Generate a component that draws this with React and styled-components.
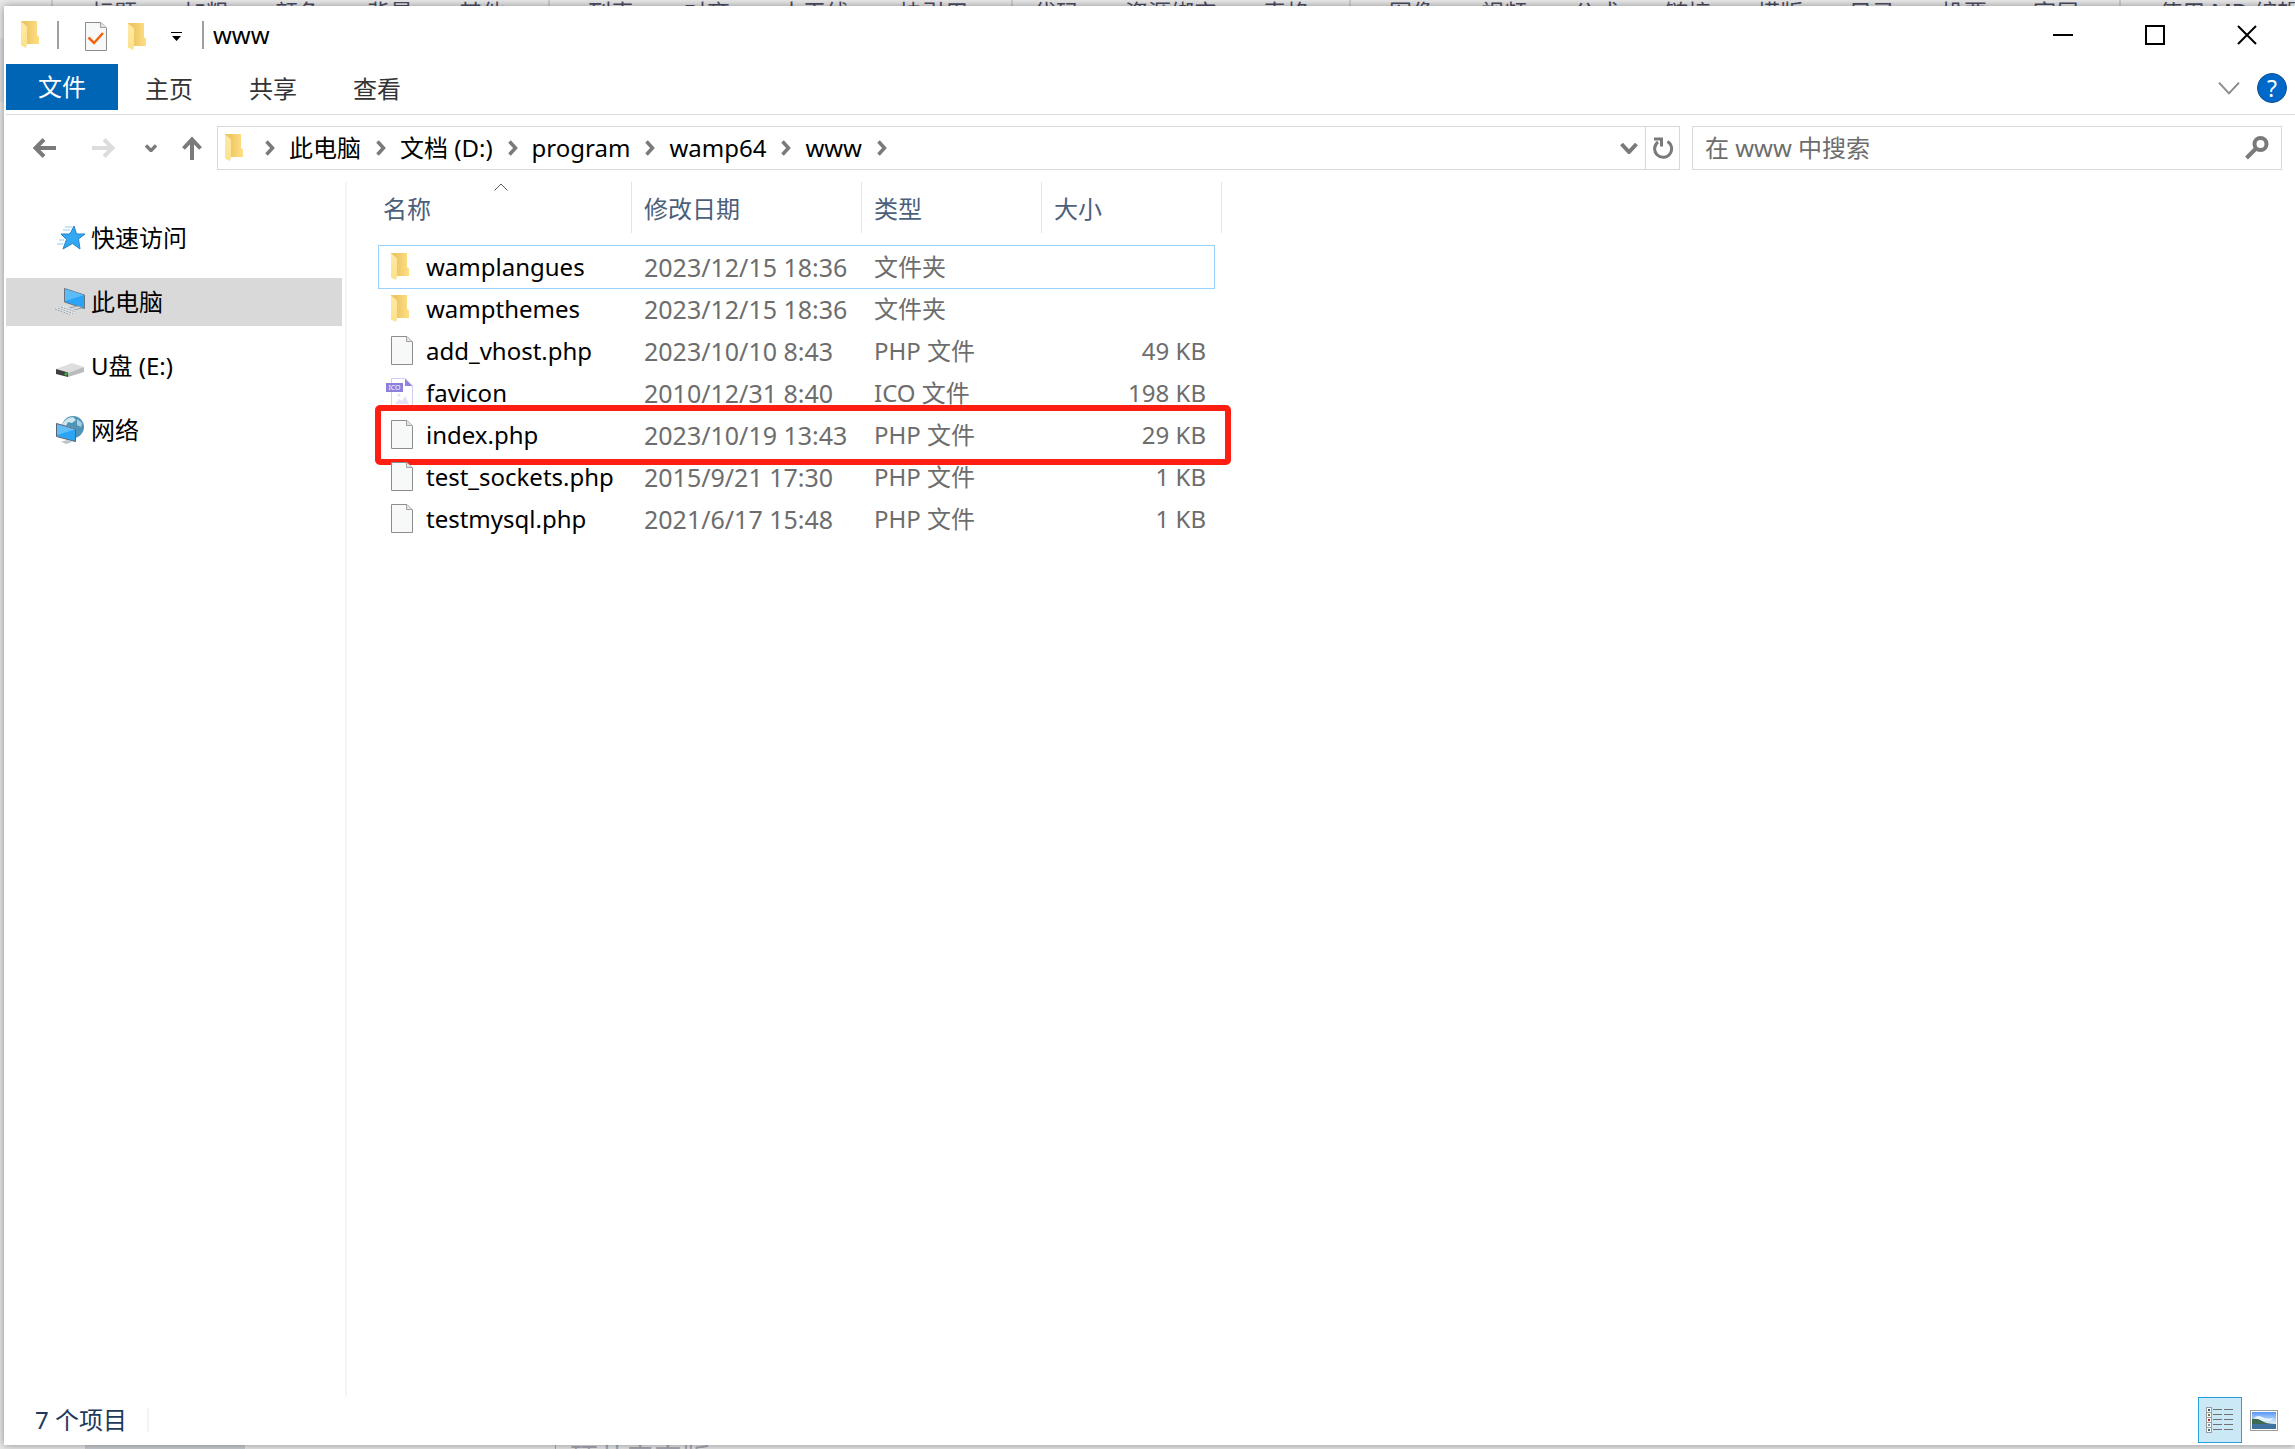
import React from "react";
import styled, { createGlobalStyle } from "styled-components";

const GlobalStyle = createGlobalStyle`
  * {
    box-sizing: border-box;
  }

  body {
    margin: 0;
    font-family: "Noto Sans", "Noto Sans CJK SC", sans-serif;
    font-size: 24px;
    line-height: 32px;
    color: #000;
  }

  button {
    margin: 0;
    padding: 0;
    border: none;
    background: none;
    font: inherit;
    color: inherit;
    cursor: pointer;
  }

  svg {
    display: block;
    flex: none;
  }
`;

const Desktop = styled.div`
  position: relative;
  display: flex;
  height: 100vh;
  padding: 6px 0 4px 4px;
  overflow: hidden;
  background: #e6e6e6;
`;

/* the editor page that sits behind the explorer window */
const Backdrop = styled.div`
  position: absolute;
  inset: 0;
  background: linear-gradient(#eaeaea 38px, #dcdfe2 38px, #dcdfe2 102px, #e8e8e8 102px);
  color: #4e4e66;
  font-size: 23px;
`;

const EditorBar = styled.div`
  display: grid;
  grid-template-columns: 51px 497px 463px 338px 770px 1fr;
  height: 38px;
  white-space: nowrap;
`;

const EditorGroup = styled.div`
  display: flex;
  gap: ${({ $gap }) => $gap || 46}px;
  padding-left: ${({ $pad }) => $pad || 38}px;
  border-left: 2px solid ${({ $plain }) => ($plain ? "transparent" : "#cfcfcf")};
  line-height: 24px;
`;

const EditorFooter = styled.div`
  position: absolute;
  left: 85px;
  bottom: 0;
  width: 160px;
  height: 4px;
  background: #c9cdd1;
`;

const EditorHint = styled.div`
  position: absolute;
  left: 555px;
  bottom: 0;
  height: 5px;
  padding-left: 14px;
  border-left: 1px solid #a8a8b4;
  overflow: hidden;
  color: #a8a8b4;
  font-size: 28px;
  line-height: 28px;
`;

const Window = styled.div`
  position: relative;
  display: flex;
  flex-direction: column;
  flex: 1;
  min-width: 0;
  padding-left: 2px;
  background: #fff;
  box-shadow: 0 0 8px rgba(0, 0, 0, 0.4);
`;

const TitleBar = styled.header`
  display: flex;
  align-items: center;
  height: 58px;
  padding: 0 2px 0 15px;
`;

const QuickTools = styled.div`
  display: flex;
  align-items: center;
  gap: 21px;
  padding: 4px 20px 0 26px;
  margin: 0 9px 0 14px;
  border-left: 2px solid #a0a0a0;
  border-right: 2px solid #a0a0a0;
  height: 28px;
`;

const WindowTitle = styled.h1`
  flex: 1;
  margin: 0;
  font-size: 24px;
  font-weight: 400;
`;

const CaptionButton = styled.button`
  display: flex;
  align-items: center;
  justify-content: center;
  width: 92px;
  height: 58px;
`;

const Ribbon = styled.nav`
  display: flex;
  height: 51px;
  border-bottom: 1px solid #dadbdc;
  padding-right: 8px;
`;

const RibbonTab = styled.button`
  height: 46px;
  padding: 3px 29px 0 27px;
  color: #333;
`;

const FileTab = styled(RibbonTab)`
  padding: 0 32px;
  background: #0065b5;
  color: #fff;
`;

const RibbonEnd = styled.div`
  display: flex;
  align-items: center;
  gap: 16px;
  height: 48px;
  margin-left: auto;
`;

const HelpButton = styled.button`
  width: 30px;
  height: 30px;
  border: 1px solid #0a4f91;
  border-radius: 50%;
  background: #0068c9;
  color: #fff;
  font-size: 23px;
  line-height: 28px;
`;

const NavBar = styled.div`
  display: flex;
  padding: 11px 13px 12px 10px;
`;

const NavButton = styled.button`
  display: flex;
  align-items: center;
  justify-content: center;
  width: ${({ $width }) => $width}px;
  height: 44px;
`;

const AddressBar = styled.div`
  display: flex;
  align-items: center;
  flex: 1;
  min-width: 0;
  height: 44px;
  margin: 0 12px 0 3px;
  padding-left: 7px;
  border: 1px solid #d9d9d9;
`;

const Crumbs = styled.div`
  display: flex;
  align-items: center;
  flex: 1;
  padding-left: 18px;
`;

const Crumb = styled.button`
  padding: 0 15px 0 14px;
  white-space: nowrap;
`;

const AddressButton = styled.button`
  display: flex;
  align-items: center;
  justify-content: center;
  width: 34px;
  height: 42px;
  border-left: 1px solid ${({ $divided }) => ($divided ? "#d9d9d9" : "transparent")};
`;

const SearchBox = styled.label`
  display: flex;
  align-items: center;
  flex: 0 1 590px;
  min-width: 0;
  height: 44px;
  padding: 0 12px;
  border: 1px solid #d9d9d9;
`;

const SearchInput = styled.input`
  flex: 1;
  min-width: 0;
  padding: 0;
  border: none;
  outline: none;
  background: none;
  font: inherit;

  &::placeholder {
    color: #6d6d6d;
    opacity: 1;
  }
`;

const Body = styled.div`
  display: flex;
  flex: 1;
  min-height: 0;
`;

const Sidebar = styled.aside`
  display: flex;
  flex-direction: column;
  gap: 16px;
  flex: none;
  width: 341px;
  padding: 32px 3px 0 0;
  border-right: 2px solid #f5f5f5;
`;

const SidebarItem = styled.button`
  display: flex;
  align-items: center;
  gap: 5px;
  height: 48px;
  padding-left: 48px;
  background: ${({ $selected }) => ($selected ? "#d9d9d9" : "transparent")};
  text-align: left;
`;

const Main = styled.main`
  flex: 1;
  padding-left: 31px;
`;

const FileTable = styled.table`
  table-layout: fixed;
  width: 844px;
  border-spacing: 0;
`;

const HeadCell = styled.th`
  position: relative;
  width: ${({ $width }) => $width}px;
  padding: 0 0 13px;
  color: #4c607a;
  font-weight: 400;
  text-align: left;
`;

const HeadLabel = styled.div`
  height: 51px;
  padding-left: ${({ $first }) => ($first ? 5 : 12)}px;
  border-right: 1px solid #e5e5e5;
  line-height: 54px;
`;

const SortMark = styled.svg`
  position: absolute;
  top: 1px;
  left: 116px;
`;

const Row = styled.tr`
  position: relative;
  height: 42px;
`;

const FocusFrame = styled.span`
  position: absolute;
  inset: -1px 7px -1px 0;
  border: 1px solid #99d1ff;
`;

const MarkFrame = styled.span`
  position: absolute;
  inset: -9px -9px -9px -3px;
  border: 6px solid #ff1f12;
  border-radius: 5px;
`;

const Cell = styled.td`
  padding: 0 0 0 12px;
  color: #6d6d6d;
  white-space: nowrap;
`;

const NameCell = styled(Cell)`
  padding-left: 8px;
  color: #000;
`;

const DateCell = styled(Cell)`
  font-size: 25px;
`;

const SizeCell = styled(Cell)`
  padding-right: 16px;
  text-align: right;
`;

const FileName = styled.div`
  display: flex;
  align-items: center;
  gap: 13px;
`;

const IconSlot = styled.span`
  display: flex;
  justify-content: flex-end;
  width: 27px;
`;

const StatusBar = styled.footer`
  display: flex;
  align-items: center;
  height: 48px;
  padding: 0 13px 2px 29px;
  color: #1e395b;
`;

const ItemCount = styled.span`
  padding-right: 20px;
  border-right: 2px solid #f3f3f3;
  line-height: 24px;
`;

const ViewButtons = styled.div`
  display: flex;
  gap: 4px;
  margin-left: auto;
`;

const ViewButton = styled.button`
  display: flex;
  align-items: center;
  justify-content: center;
  width: ${({ $active }) => ($active ? 44 : 36)}px;
  height: 46px;
  border: 1px solid ${({ $active }) => ($active ? "#26a0da" : "transparent")};
  background: ${({ $active }) => ($active ? "#cbe8f6" : "transparent")};
`;

const FolderIcon = () => (
  <svg width="22" height="28" viewBox="0 0 22 28">
    <defs>
      <linearGradient id="folderBack" x1="0" y1="0" x2="1" y2="0">
        <stop offset="0.3" stopColor="#eec765" />
        <stop offset="1" stopColor="#ffdf85" />
      </linearGradient>
      <linearGradient id="folderFlap" x1="0" y1="0" x2="0" y2="1">
        <stop offset="0" stopColor="#ffeaa6" />
        <stop offset="1" stopColor="#fde08a" />
      </linearGradient>
    </defs>
    <path d="M0 0H16V14L18 15.500V23H0Z" fill="url(#folderBack)" />
    <path d="M0 0.500L5 4.500Q6 5.300 6 6.500V23L5 27L0 24.500Z" fill="url(#folderFlap)" />
  </svg>
);

const FileIcon = ({ checked }) => (
  <svg width="22" height="30" viewBox="0 0 22 30">
    <path d="M0.500 0.500H16L21.500 6V28.500H0.500Z" fill="#f7f9f9" stroke="#8c8c8c" />
    <path d="M15.500 0.500V5.500H21" fill="#e4e4e4" stroke="#a0a0a0" />
    {checked && (
      <path d="M3.500 15.500L9 21L18 11" fill="none" stroke="#f7630c" strokeWidth="2.500" />
    )}
  </svg>
);

const IcoIcon = () => (
  <svg width="27" height="30" viewBox="0 0 27 30">
    <path d="M5.500 6V0.500H19L26.500 8V29H5.500V14" fill="#fff" stroke="#d3cdf4" />
    <path d="M19 0.500L26.500 8H19Z" fill="#9185e0" />
    <circle cx="13" cy="17" r="1.500" fill="#e4e0f8" />
    <path d="M9 26L13 21L16 23L19 18L23 26Z" fill="#e4e0f8" />
    <rect x="0" y="5" width="17" height="9" fill="#8b80dc" />
    <text x="8.500" y="12" textAnchor="middle" fontSize="7" fill="#fff">
      ICO
    </text>
  </svg>
);

const StarIcon = () => (
  <svg width="32" height="28" viewBox="0 0 32 28">
    <path
      d="M20 2L22.500 10H31L24.500 15L26 25L18.500 19.500L9 25L12.500 15.500L7 10H16Z"
      fill="#35a8f4"
      stroke="#1d86cf"
    />
    <path d="M11 3H18M9 6H16M5 16H10M3 20H9" stroke="#8ecbf2" />
  </svg>
);

const ComputerIcon = () => (
  <svg width="32" height="28" viewBox="0 0 32 28">
    <path d="M10.500 0.500L30.500 7V20.500L10.500 14Z" fill="#2ba4f5" stroke="#68747e" />
    <path d="M11 1L30 7L11 13Z" fill="#5cbcfa" />
    <path d="M15 20L24 18L28 20L20 22Z" fill="#d5d9dc" stroke="#9aa3aa" />
    <path d="M0 21L10 18L24 23L16 27Z" fill="#e3e6e8" />
    <path d="M1 21L16 26.500M4 20L19 25.500M7 19L22 24" stroke="#98a2a9" strokeDasharray="2 1" />
  </svg>
);

const DriveIcon = () => (
  <svg width="32" height="28" viewBox="0 0 32 28">
    <path d="M2 17L18 11L30 15L14 21Z" fill="#dedede" />
    <path d="M14 21L30 15V20L14 25Z" fill="#b9bbbd" />
    <path d="M2 17L14 20.500V25L2 22Z" fill="#3f3f3f" />
    <circle cx="12" cy="22" r="1.500" fill="#35c43e" />
  </svg>
);

const NetworkIcon = () => (
  <svg width="32" height="28" viewBox="0 0 32 28">
    <circle cx="19" cy="11" r="11" fill="#4f94b8" />
    <path d="M9 7Q13 1 19 1L22 4L18 7L14 6L12 10L9 10Z" fill="#cfe5ec" />
    <path d="M23 3L28 7L27 11L23 9Z" fill="#a7cfdd" />
    <path d="M2.500 7.500L21.500 13V26L2.500 20.500Z" fill="#2ba4f5" stroke="#e8eef2" />
    <path d="M3 8L21 13.500L3 19Z" fill="#63bdf8" />
    <path d="M2.500 7.500L21.500 13V25.500L2.500 20.500Z" fill="none" stroke="#55646f" />
    <path d="M7 25.500L14 24L18 26L12 28Z" fill="#bcc3c8" />
  </svg>
);

const CrumbArrow = () => (
  <svg width="10" height="16" viewBox="0 0 10 16">
    <path d="M1.500 1.500L7.500 8L1.500 14.500" fill="none" stroke="#7a7a7a" strokeWidth="3.500" />
  </svg>
);

const DownArrow = ({ width = 18, color = "#7a7a7a", stroke = 4 }) => (
  <svg width={width} height={(width * 2) / 3} viewBox="0 0 18 12">
    <path d="M1.500 2L9 10L16.500 2" fill="none" stroke={color} strokeWidth={stroke} />
  </svg>
);

const Arrow = ({ d, color = "#7a7a7a" }) => (
  <svg width="24" height="24" viewBox="0 0 24 24">
    <path d={d} fill="none" stroke={color} strokeWidth="4" />
  </svg>
);

const DetailsIcon = () => (
  <svg width="28" height="26" viewBox="0 0 28 26">
    {["#2f5d73", "#6b7d3c", "#b02a1c", "#7c8fa8", "#2f7077"].map((color, i) => (
      <g key={color}>
        <rect x="0.500" y={i * 5 + 0.500} width="5" height="5" fill="#fff" stroke="#9a9a9a" />
        <rect x="2" y={i * 5 + 2} width="2" height="2" fill={color} />
        <path d={`M7 ${i * 5 + 2.5}H16M18 ${i * 5 + 2.5}H27`} stroke="#707070" />
      </g>
    ))}
  </svg>
);

const ThumbnailIcon = () => (
  <svg width="28" height="21" viewBox="0 0 28 21">
    <defs>
      <linearGradient id="thumbSky" x1="0" y1="0" x2="0" y2="1">
        <stop offset="0" stopColor="#5a98f5" />
        <stop offset="1" stopColor="#e6f4fd" />
      </linearGradient>
    </defs>
    <rect x="0.500" y="0.500" width="27" height="20" fill="#fff" stroke="#9c9c9c" />
    <rect x="2" y="2" width="24" height="12" fill="url(#thumbSky)" />
    <path d="M3 9Q7 4 12 7T24 8L20 11H4Z" fill="#e9f5fd" />
    <path d="M2 9Q8 8 12 11T26 14V15H2Z" fill="#3d6a51" />
    <rect x="2" y="14" width="24" height="5" fill="#40719f" />
  </svg>
);

const editorGroups = [
  { labels: [], plain: true },
  { labels: ["标题", "加粗", "颜色", "背景", "其他"] },
  { labels: ["列表", "对齐", "水平线", "块引用"], gap: 50 },
  { labels: ["代码", "资源绑定", "表格"], pad: 20 },
  { labels: ["图像", "视频", "公式", "链接", "模版", "目录", "投票", "宽屏"] },
  { labels: ["使用 MD 编辑器"] },
];

const places = [
  { label: "快速访问", Icon: StarIcon },
  { label: "此电脑", Icon: ComputerIcon, selected: true },
  { label: "U盘 (E:)", Icon: DriveIcon },
  { label: "网络", Icon: NetworkIcon },
];

const crumbs = ["此电脑", "文档 (D:)", "program", "wamp64", "www"];

const columns = [
  { label: "名称", width: 254 },
  { label: "修改日期", width: 230 },
  { label: "类型", width: 180 },
  { label: "大小", width: 180 },
];

const files = [
  { name: "wamplangues", date: "2023/12/15 18:36", type: "文件夹", Icon: FolderIcon, focused: true },
  { name: "wampthemes", date: "2023/12/15 18:36", type: "文件夹", Icon: FolderIcon },
  { name: "add_vhost.php", date: "2023/10/10 8:43", type: "PHP 文件", size: "49 KB", Icon: FileIcon },
  { name: "favicon", date: "2010/12/31 8:40", type: "ICO 文件", size: "198 KB", Icon: IcoIcon },
  { name: "index.php", date: "2023/10/19 13:43", type: "PHP 文件", size: "29 KB", Icon: FileIcon, marked: true },
  { name: "test_sockets.php", date: "2015/9/21 17:30", type: "PHP 文件", size: "1 KB", Icon: FileIcon },
  { name: "testmysql.php", date: "2021/6/17 15:48", type: "PHP 文件", size: "1 KB", Icon: FileIcon },
];

const App = () => {
  return (
    <>
      <GlobalStyle />
      <Desktop>
        <Backdrop aria-hidden="true">
          <EditorBar>
            {editorGroups.map(({ labels, gap, pad, plain }, i) => (
              <EditorGroup key={i} $gap={gap} $pad={pad} $plain={plain}>
                {labels.map((label) => (
                  <span key={label}>{label}</span>
                ))}
              </EditorGroup>
            ))}
          </EditorBar>
          <EditorFooter />
          <EditorHint>硬共音直版</EditorHint>
        </Backdrop>

        <Window>
          <TitleBar>
            <FolderIcon />
            <QuickTools>
              <button aria-label="属性">
                <FileIcon checked />
              </button>
              <button aria-label="新建文件夹">
                <FolderIcon />
              </button>
              <button aria-label="自定义快速访问工具栏">
                <svg width="11" height="10" viewBox="0 0 11 10">
                  <path d="M0 0H11V1H0ZM1 4H10L5.500 9Z" fill="#000" />
                </svg>
              </button>
            </QuickTools>
            <WindowTitle>www</WindowTitle>
            <CaptionButton aria-label="最小化">
              <svg width="20" height="20" viewBox="0 0 20 20">
                <path d="M0 10H20" stroke="#000" strokeWidth="2" />
              </svg>
            </CaptionButton>
            <CaptionButton aria-label="最大化">
              <svg width="20" height="20" viewBox="0 0 20 20">
                <rect x="1" y="1" width="18" height="18" fill="none" stroke="#000" strokeWidth="2" />
              </svg>
            </CaptionButton>
            <CaptionButton aria-label="关闭">
              <svg width="20" height="20" viewBox="0 0 20 20">
                <path d="M1 1L19 19M19 1L1 19" stroke="#000" strokeWidth="2" />
              </svg>
            </CaptionButton>
          </TitleBar>

          <Ribbon>
            <FileTab>文件</FileTab>
            <RibbonTab>主页</RibbonTab>
            <RibbonTab>共享</RibbonTab>
            <RibbonTab>查看</RibbonTab>
            <RibbonEnd>
              <button aria-label="展开功能区">
                <DownArrow width={24} color="#8a8a8a" stroke={1.5} />
              </button>
              <HelpButton aria-label="帮助">?</HelpButton>
            </RibbonEnd>
          </Ribbon>

          <NavBar>
            <NavButton $width={58} aria-label="后退">
              <Arrow d="M23 12H3M11 3.500L2.500 12L11 20.500" />
            </NavButton>
            <NavButton $width={58} aria-label="前进" disabled>
              <Arrow d="M1 12H21M13 3.500L21.500 12L13 20.500" color="#dcdcdc" />
            </NavButton>
            <NavButton $width={38} aria-label="最近位置">
              <DownArrow width={12} stroke={5} />
            </NavButton>
            <NavButton $width={44} aria-label="上移">
              <Arrow d="M12 24V4M3.500 12.500L12 3.500L20.500 12.500" />
            </NavButton>
            <AddressBar>
              <FolderIcon />
              <Crumbs>
                <CrumbArrow />
                {crumbs.map((crumb) => (
                  <React.Fragment key={crumb}>
                    <Crumb>{crumb}</Crumb>
                    <CrumbArrow />
                  </React.Fragment>
                ))}
              </Crumbs>
              <AddressButton aria-label="以前的位置">
                <DownArrow />
              </AddressButton>
              <AddressButton $divided aria-label="刷新">
                <svg width="22" height="22" viewBox="0 0 22 22">
                  <path d="M15.500 4.500A8.500 8.500 0 1 1 6 5" fill="none" stroke="#7a7a7a" strokeWidth="3" />
                  <path d="M2 2H9.500V9.500" fill="none" stroke="#7a7a7a" strokeWidth="3" />
                </svg>
              </AddressButton>
            </AddressBar>
            <SearchBox>
              <SearchInput type="text" placeholder="在 www 中搜索" aria-label="搜索" />
              <svg width="24" height="24" viewBox="0 0 24 24">
                <circle cx="15.500" cy="8" r="6" fill="none" stroke="#7a7a7a" strokeWidth="4" />
                <path d="M11.500 12L1.500 22" stroke="#7a7a7a" strokeWidth="4" />
              </svg>
            </SearchBox>
          </NavBar>

          <Body>
            <Sidebar>
              {places.map(({ label, Icon, selected }) => (
                <SidebarItem key={label} $selected={selected}>
                  <Icon />
                  {label}
                </SidebarItem>
              ))}
            </Sidebar>
            <Main>
              <FileTable>
                <thead>
                  <tr>
                    {columns.map(({ label, width }, i) => (
                      <HeadCell key={label} $width={width} scope="col">
                        {i === 0 && (
                          <SortMark width="14" height="8" viewBox="0 0 14 8">
                            <path d="M0.500 7.500L7 1L13.500 7.500" fill="none" stroke="#5a5a5a" />
                          </SortMark>
                        )}
                        <HeadLabel $first={i === 0}>{label}</HeadLabel>
                      </HeadCell>
                    ))}
                  </tr>
                </thead>
                <tbody>
                  {files.map(({ name, date, type, size, Icon, focused, marked }) => (
                    <Row key={name}>
                      <NameCell>
                        <FileName>
                          <IconSlot>
                            <Icon />
                          </IconSlot>
                          {name}
                        </FileName>
                        {focused && <FocusFrame />}
                      </NameCell>
                      <DateCell>{date}</DateCell>
                      <Cell>{type}</Cell>
                      <SizeCell>
                        {size}
                        {marked && <MarkFrame />}
                      </SizeCell>
                    </Row>
                  ))}
                </tbody>
              </FileTable>
            </Main>
          </Body>

          <StatusBar>
            <ItemCount>7 个项目</ItemCount>
            <ViewButtons>
              <ViewButton $active aria-label="详细信息">
                <DetailsIcon />
              </ViewButton>
              <ViewButton aria-label="大缩略图">
                <ThumbnailIcon />
              </ViewButton>
            </ViewButtons>
          </StatusBar>
        </Window>
      </Desktop>
    </>
  );
};

export default App;
